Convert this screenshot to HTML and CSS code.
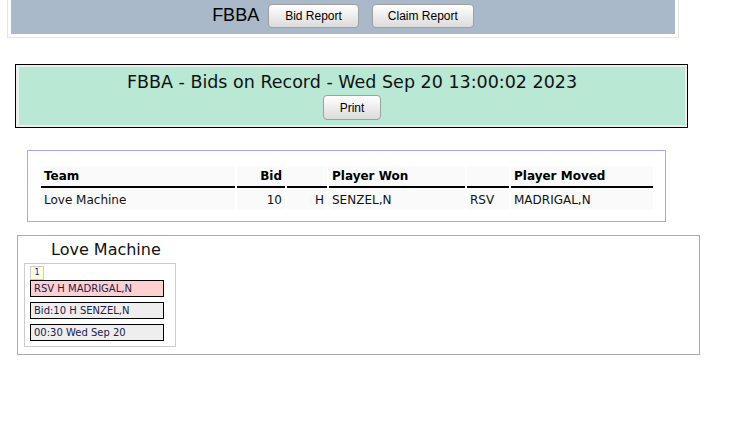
FILE: index.html
```html
<!DOCTYPE html>
<html lang="en">
<head>
    <meta charset="UTF-8">
    <meta name="viewport" content="width=device-width, initial-scale=1.0">
    <title>FBBA - Bids on Record</title>
    <link rel="stylesheet" href="styles.css">
</head>
<body>
    <div class="topbar">
        <div class="nav">
            <span class="nav-title">FBBA</span>
            <button class="btn">Bid Report</button>
            <button class="btn btn-claim">Claim Report</button>
        </div>
    </div>

    <div class="banner">
        <div class="banner-inner">
            <div class="banner-title">FBBA - Bids on Record - Wed Sep 20 13:00:02 2023</div>
            <button class="btn btn-print">Print</button>
        </div>
    </div>

    <div class="bids">
        <table class="bid-table">
            <colgroup>
                <col style="width: 194px">
                <col style="width: 48px">
                <col style="width: 40px">
                <col style="width: 136px">
                <col style="width: 42px">
                <col style="width: 142px">
            </colgroup>
            <thead>
                <tr>
                    <th>Team</th>
                    <th class="num">Bid</th>
                    <th></th>
                    <th>Player Won</th>
                    <th></th>
                    <th>Player Moved</th>
                </tr>
            </thead>
            <tbody>
                <tr>
                    <td>Love Machine</td>
                    <td class="num">10</td>
                    <td class="num">H</td>
                    <td>SENZEL,N</td>
                    <td>RSV</td>
                    <td>MADRIGAL,N</td>
                </tr>
            </tbody>
        </table>
    </div>

    <div class="teams">
        <div class="team">
            <div class="team-name">Love Machine</div>
            <div class="team-card">
                <div class="badge">1</div>
                <div class="entry entry-moved">RSV H MADRIGAL,N</div>
                <div class="entry">Bid:10 H SENZEL,N</div>
                <div class="entry">00:30 Wed Sep 20</div>
            </div>
        </div>
    </div>
</body>
</html>
```

FILE: styles.css
```css
body {
    margin: 0;
    font-family: "DejaVu Sans", Verdana, sans-serif;
    background: white;
    color: #000;
}
.topbar {
    margin-left: 7px;
    width: 664px;
    padding: 0 3px 3px 3px;
    border: 1px solid #e4e4e4;
    border-top: none;
}
.nav {
    background-color: #a9b9c9;
    height: 34px;
    display: flex;
    align-items: center;
    justify-content: center;
}
.nav-title {
    font-family: "Liberation Sans", Arial, sans-serif;
    font-size: 18px;
    margin-right: 9px;
    padding-bottom: 3px;
}
.btn {
    font-family: "Liberation Sans", Arial, sans-serif;
    font-size: 12px;
    color: #000;
    background: linear-gradient(#ffffff, #e6e6e6 70%, #dcdcdc);
    border: 1px solid #a0a0a0;
    border-radius: 4px;
    height: 24px;
    padding: 0 16px;
    cursor: pointer;
    margin-bottom: 2px;
}
.btn-claim {
    margin-left: 13px;
    padding: 0 15px;
}
.banner {
    margin: 26px 0 0 15px;
    width: 666px;
    border: 1px solid #000;
    background: #eeeeee;
    padding: 2px 2px 2px 3px;
}
.banner-inner {
    background-color: #b9e8d4;
    height: 58px;
    text-align: center;
    padding-top: 4px;
    box-sizing: border-box;
}
.banner-title {
    font-size: 17.5px;
    color: #111;
    line-height: 22px;
}
.btn-print {
    margin-top: 2px;
    height: 25px;
    padding: 0 16px;
}
.bids {
    margin: 22px 0 0 27px;
    width: 614px;
    border: 1px solid #a8a8ee;
    padding: 13px 12px 9px 11px;
}
.bid-table {
    width: 616px;
    table-layout: fixed;
    border-collapse: separate;
    border-spacing: 2px;
    font-size: 12px;
}
.bid-table th,
.bid-table td {
    background: #fafafa;
    text-align: left;
    padding: 0 3px;
    white-space: nowrap;
}
.bid-table th {
    font-weight: bold;
    height: 20px;
    border-bottom: 2px solid #000;
}
.bid-table td {
    height: 20px;
    color: #111;
}
.bid-table .num {
    text-align: right;
}
.teams {
    margin: 13px 0 0 17px;
    width: 683px;
    height: 120px;
    border: 1px solid #aaaaaa;
    padding: 4px 0 0 6px;
    box-sizing: border-box;
}
.team {
    width: 152px;
}
.team-name {
    font-size: 16px;
    padding-left: 27px;
    line-height: 20px;
    color: #111;
}
.team-card {
    margin-top: 3px;
    border: 1px solid #cccccc;
    padding: 2px 11px 5px 5px;
}
.badge {
    width: 12px;
    height: 12px;
    border: 1px solid #cccccc;
    background: #ffffd8;
    color: #1010c0;
    font-size: 8px;
    line-height: 12px;
    text-align: center;
}
.entry {
    border: 1px solid #000;
    background: #eeeeee;
    color: #202050;
    font-size: 10px;
    height: 15px;
    line-height: 15px;
    padding-left: 3px;
    margin-bottom: 5px;
}
.entry:last-child {
    margin-bottom: 0;
}
.entry-moved {
    background: #ffd0d0;
}
```
